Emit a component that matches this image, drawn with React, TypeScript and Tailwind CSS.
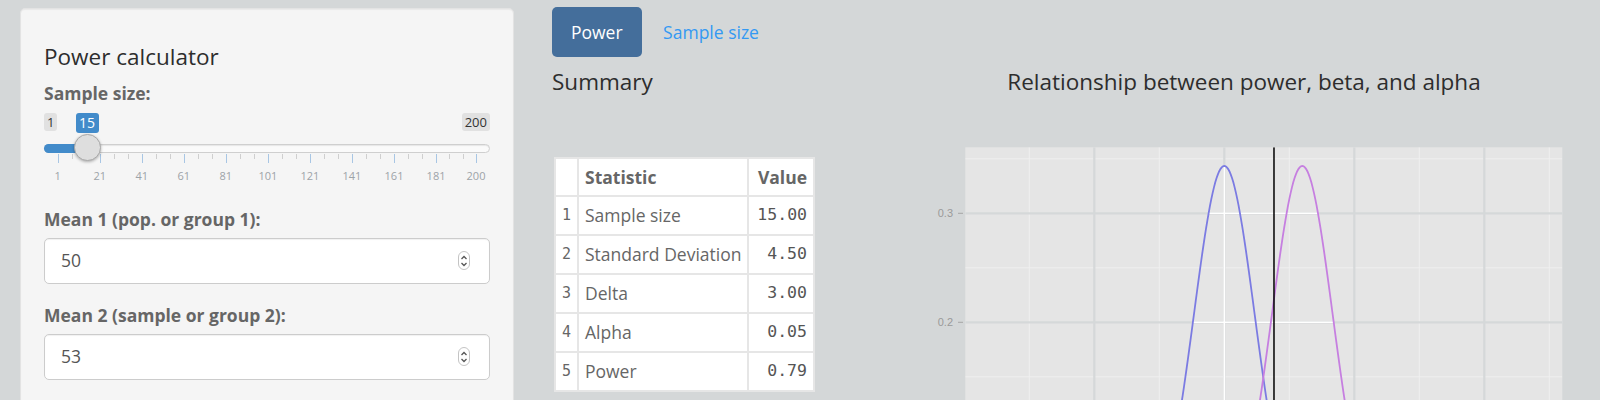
import React from 'react';

const SD = 4.5 / Math.sqrt(15);
const pdf = (x: number, m: number) =>
    Math.exp(-0.5 * ((x - m) / SD) ** 2) / (SD * Math.sqrt(2 * Math.PI));
// plot coords, offset from the plot column's top-left
const X = (v: number) => 317.3 + (v - 50) * 26;
const Y = (p: number) => 83.3 - (p - 0.3) * 1090;

function curve(m: number, from = 40, to = 63) {
    const pts: string[] = [];
    for (let v = from; v <= to + 1e-9; v += 0.05) {
        pts.push(`${X(v).toFixed(1)},${Y(pdf(v, m)).toFixed(1)}`);
    }
    return pts;
}

// slider geometry (px from slider's left edge)
const pos = (v: number) => 13.7 + (v - 1) * (418.3 / 199);
const majors = [1, 21, 41, 61, 81, 101, 121, 141, 161, 181, 200];
const minors: number[] = [];
for (let i = 0; i < majors.length - 1; i++) {
    const a = majors[i];
    const b = majors[i + 1];
    minors.push(a + (b - a) / 3, a + (2 * (b - a)) / 3);
}

function Spinner() {
    return (
        <div className="flex h-[19px] w-[12px] flex-col items-center justify-center rounded-full border border-[#c4c4c4] bg-white">
            <svg width="8" height="14" viewBox="0 0 8 14" fill="none" stroke="#555" strokeWidth="1.3">
                <path d="M1.5 5 L4 2.5 L6.5 5" />
                <path d="M1.5 9 L4 11.5 L6.5 9" />
            </svg>
        </div>
    );
}

function NumberInput({ label, value }: { label: string; value: string }) {
    return (
        <div className="mb-[19px]">
            <label className="mb-[6px] block text-[17.5px] font-bold leading-[25px] text-[#666]">{label}</label>
            <div className="flex h-[46px] items-center justify-between rounded-[5px] border border-[#cccccc] bg-white pl-[16px] pr-[19px] shadow-[inset_0_1px_1px_rgba(0,0,0,0.06)]">
                <span className="text-[17.5px] text-[#555]">{value}</span>
                <Spinner />
            </div>
        </div>
    );
}

function Slider() {
    return (
        <div className="relative mb-[19px] h-[82px] w-full">
            <span className="absolute left-0 top-[7px] rounded-[3px] bg-[#e1e1e1] px-[3px] text-[13px] leading-[18px] text-[#333]">1</span>
            <span className="absolute right-0 top-[7px] rounded-[3px] bg-[#e1e1e1] px-[3px] text-[13px] leading-[18px] text-[#333]">200</span>
            <span
                className="absolute top-[7px] w-[23px] rounded-[3px] bg-[#428bca] text-center text-[14px] leading-[20px] text-white"
                style={{ left: pos(15) - 11.5 }}
            >
                15
            </span>
            <div className="absolute left-0 right-0 top-[38px] h-[9px] rounded-full border border-[#cfcfcf] bg-[#fafafa] shadow-[inset_0_1px_1px_rgba(0,0,0,0.08)]" />
            <div className="absolute left-0 top-[38px] h-[9px] rounded-l-full bg-[#428bca]" style={{ width: pos(15) }} />
            {majors.map((v) => (
                <div key={'M' + v} className="absolute top-[48px] h-[9px] w-px bg-[#a8c6e4]" style={{ left: pos(v) }} />
            ))}
            {minors.map((v) => (
                <div key={'m' + v} className="absolute top-[48px] h-[5px] w-px bg-[#cfcfcf]" style={{ left: pos(v) }} />
            ))}
            {majors.map((v) => (
                <span
                    key={'l' + v}
                    className="absolute top-[63px] w-[30px] text-center text-[11px] leading-[13px] text-[#9da3a8]"
                    style={{ left: pos(v) - 15 }}
                >
                    {v}
                </span>
            ))}
            <div
                className="absolute top-[28px] h-[27px] w-[27px] rounded-full border border-[#a9a9a9] bg-[#dedede] shadow-[0_1px_3px_rgba(0,0,0,0.3)]"
                style={{ left: pos(15) - 13.5 }}
            />
        </div>
    );
}

const rows: [string, string][] = [
    ['Sample size', '15.00'],
    ['Standard Deviation', '4.50'],
    ['Delta', '3.00'],
    ['Alpha', '0.05'],
    ['Power', '0.79'],
];

function SummaryTable() {
    return (
        <table className="ml-[2px] w-[259px] table-fixed border-collapse bg-white text-[17.5px] text-[#666]">
            <colgroup>
                <col className="w-[23px]" />
                <col className="w-[170px]" />
                <col className="w-[66px]" />
            </colgroup>
            <thead>
                <tr className="h-[38px]">
                    <th className="border-2 border-[#e6e6e6]" />
                    <th className="border-2 border-[#e6e6e6] px-[6px] text-left font-bold">Statistic</th>
                    <th className="border-2 border-[#e6e6e6] px-[6px] text-right font-bold">Value</th>
                </tr>
            </thead>
            <tbody>
                {rows.map(([name, val], i) => (
                    <tr key={name} className="h-[39px]">
                        <td className="border-2 border-[#e6e6e6] text-center font-['DejaVu_Sans_Mono',monospace] text-[15px]">{i + 1}</td>
                        <td className="whitespace-nowrap border-2 border-[#e6e6e6] px-[6px]">{name}</td>
                        <td className="border-2 border-[#e6e6e6] px-[6px] text-right font-['DejaVu_Sans_Mono',monospace] text-[16.5px] text-[#555]">
                            {val}
                        </td>
                    </tr>
                ))}
            </tbody>
        </table>
    );
}

function PowerPlot() {
    const blue = curve(50);
    const purple = curve(53);
    const hull = [
        ...curve(50, 40, 50),
        ...curve(53, 53, 63),
        `${X(63)},${Y(0)}`,
        `${X(40)},${Y(0)}`,
    ].join(' ');
    const left = 58.3;
    const right = 655.3;
    const top = 17.3;
    const majorX = [45, 50, 55, 60];
    const minorX = [42.5, 47.5, 52.5, 57.5, 62.5];
    const majorY = [0.2, 0.3];
    const minorY = [0.15, 0.25, 0.35];
    const crit = 50 + 1.6449 * SD;

    return (
        <svg width="674" height="270" className="block">
            <defs>
                <clipPath id="panel">
                    <rect x={left} y={top} width={right - left} height={400} />
                </clipPath>
                <clipPath id="hull">
                    <polygon points={hull} />
                </clipPath>
            </defs>
            <rect x={left} y={top} width={right - left} height={400} fill="#e5e5e5" />
            <g clipPath="url(#panel)">
                {minorX.map((v) => (
                    <line key={v} x1={X(v)} x2={X(v)} y1={top} y2={400} stroke="#efefef" strokeWidth="1" />
                ))}
                {minorY.map((p) => (
                    <line key={p} x1={left} x2={right} y1={Y(p)} y2={Y(p)} stroke="#efefef" strokeWidth="1" />
                ))}
                {majorX.map((v) => (
                    <line key={v} x1={X(v)} x2={X(v)} y1={top} y2={400} stroke="#d5d8d9" strokeWidth="2.2" />
                ))}
                {majorY.map((p) => (
                    <line key={p} x1={left} x2={right} y1={Y(p)} y2={Y(p)} stroke="#d5d8d9" strokeWidth="2.2" />
                ))}
                <g clipPath="url(#hull)">
                    {majorX.map((v) => (
                        <line key={v} x1={X(v)} x2={X(v)} y1={top} y2={400} stroke="#ffffff" strokeWidth="1.6" />
                    ))}
                    {majorY.map((p) => (
                        <line key={p} x1={left} x2={right} y1={Y(p)} y2={Y(p)} stroke="#ffffff" strokeWidth="1.6" />
                    ))}
                </g>
                <polyline points={blue.join(' ')} fill="none" stroke="#7b7be2" strokeWidth="1.8" />
                <polyline points={purple.join(' ')} fill="none" stroke="#c67fe0" strokeWidth="1.8" />
                <line x1={X(crit)} x2={X(crit)} y1={top} y2={400} stroke="#000" strokeWidth="1.5" />
            </g>
            {majorY.map((p) => (
                <g key={p}>
                    <line x1={51} x2={56} y1={Y(p)} y2={Y(p)} stroke="#a6a6a6" strokeWidth="1" />
                    <text
                        x={46}
                        y={Y(p) + 4}
                        textAnchor="end"
                        fontSize="11"
                        fill="#9a9a9a"
                        fontFamily="'Liberation Sans', sans-serif"
                    >
                        {p.toFixed(1)}
                    </text>
                </g>
            ))}
        </svg>
    );
}

export default function App() {
    return (
        <div className="flex h-[400px] w-[1600px] overflow-hidden bg-[#d4d7d8] font-['Open_Sans',sans-serif]">
            {/* sidebar */}
            <div className="w-[532px] shrink-0 pl-[20px] pr-[18px] pt-[8px]">
                <div className="h-[430px] rounded-[5px] border border-[#e3e3e3] bg-[#f5f5f5] px-[23px] pt-[34.5px] shadow-[inset_0_1px_1px_rgba(0,0,0,0.05)]">
                    <h4 className="mb-[12px] text-[22.5px] font-normal leading-[25px] text-[#2d2d2d]">Power calculator</h4>
                    <label className="block text-[17.5px] font-bold leading-[25px] text-[#666]">Sample size:</label>
                    <Slider />
                    <NumberInput label="Mean 1 (pop. or group 1):" value="50" />
                    <NumberInput label="Mean 2 (sample or group 2):" value="53" />
                </div>
            </div>

            {/* main panel */}
            <div className="flex-1 pl-[20px] pt-[7px]">
                <div className="flex gap-[2.5px]">
                    <div className="flex h-[50px] items-center rounded-[5px] bg-[#446e9b] px-[19px] text-[17.5px] text-white">Power</div>
                    <div className="flex h-[50px] items-center px-[19px] text-[17.5px] text-[#3399f3]">Sample size</div>
                </div>
                <div className="flex">
                    <div className="w-[355px] shrink-0">
                        <h4 className="mt-[12px] text-[22.5px] font-normal leading-[25px] text-[#2d2d2d]">Summary</h4>
                        <div className="mt-[63px]">
                            <SummaryTable />
                        </div>
                    </div>
                    <div className="w-[674px] shrink-0">
                        <h4 className="mt-[12px] text-center text-[22.5px] font-normal leading-[25px] text-[#2d2d2d]">
                            Relationship between power, beta, and alpha
                        </h4>
                        <div className="mt-[36px]">
                            <PowerPlot />
                        </div>
                    </div>
                </div>
            </div>
        </div>
    );
}
